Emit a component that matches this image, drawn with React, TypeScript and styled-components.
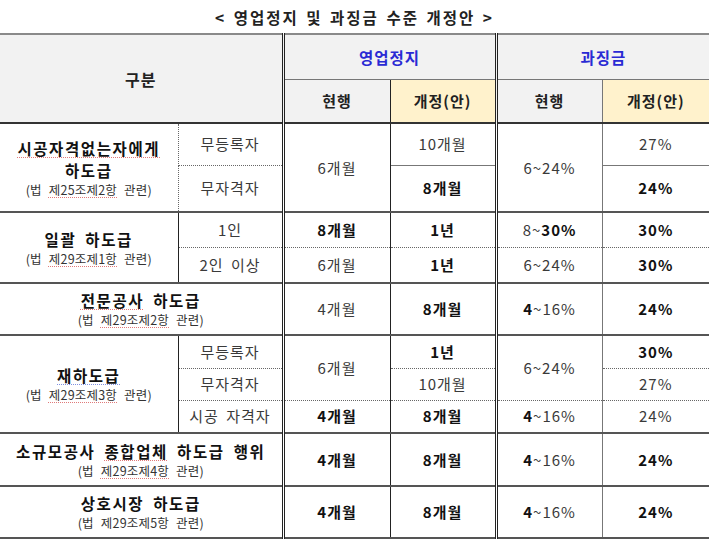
import React from "react";
import styled, { createGlobalStyle, css } from "styled-components";

const Global = createGlobalStyle`
  html, body { margin: 0; padding: 0; background: #ffffff; }
  body { font-family: "Noto Sans CJK KR", "Noto Sans", sans-serif; color: #333; }
`;

const Page = styled.div`
  width: 709px;
  display: flex;
  flex-direction: column;
`;

const Title = styled.div`
  height: 33px;
  display: flex;
  align-items: center;
  justify-content: center;
  font-size: 15.5px;
  font-weight: 700;
  letter-spacing: 2px;
  word-spacing: 2px;
  color: #222;
`;

const Table = styled.table`
  width: 709px;
  border-collapse: collapse;
  table-layout: fixed;
  border-top: 2px solid #8a8a8a;
  border-bottom: 2px solid #555;
`;

type Left = "none" | "dot" | "double" | "black" | "gray";
type Top = "none" | "dot" | "thin" | "group" | "head";
type Bg = "white" | "gray" | "yellow";

const leftBorder = (l: Left) => {
  switch (l) {
    case "dot":
      return "1px dotted #666";
    case "double":
      return "3px double #222";
    case "black":
      return "1px solid #222";
    case "gray":
      return "1px solid #777";
    default:
      return "none";
  }
};

const topBorder = (t: Top) => {
  switch (t) {
    case "dot":
      return "1px dotted #666";
    case "thin":
      return "1px solid #777";
    case "group":
      return "2px solid #555";
    case "head":
      return "2px solid #333";
    default:
      return "none";
  }
};

const bgColor = (b: Bg) =>
  b === "gray" ? "#f2f2f2" : b === "yellow" ? "#fff2cc" : "#ffffff";

const Row = styled.tr<{ $h: number }>`
  height: ${(p) => p.$h}px;
`;

const Cell = styled.td<{
  $left?: Left;
  $top?: Top;
  $bg?: Bg;
  $bold?: boolean;
  $blue?: boolean;
}>`
  padding: 0;
  text-align: center;
  vertical-align: middle;
  font-size: 15px;
  letter-spacing: 1px;
  word-spacing: 3px;
  line-height: 20px;
  border-left: ${(p) => leftBorder(p.$left ?? "none")};
  border-top: ${(p) => topBorder(p.$top ?? "none")};
  background: ${(p) => bgColor(p.$bg ?? "white")};
  color: ${(p) => (p.$blue ? "#2a2ad4" : p.$bold ? "#111" : "#3a3a3a")};
  font-weight: ${(p) => (p.$bold || p.$blue ? 700 : 400)};
  ${(p) =>
    p.$bg === "gray" || p.$bg === "yellow"
      ? css`
          color: ${p.$blue ? "#2a2ad4" : "#222"};
          font-weight: 700;
          font-size: ${p.$blue ? "15.5px" : "15px"};
        `
      : ""}
`;

const Strong = styled.b`
  font-weight: 700;
  color: #111;
`;

const MainLabel = styled.div`
  font-size: 15.5px;
  font-weight: 700;
  line-height: 22px;
  color: #111;
  letter-spacing: 1.6px;
  word-spacing: 4px;
`;

const SubLabel = styled.div`
  font-size: 12.5px;
  font-weight: 400;
  line-height: 18px;
  color: #333;
  letter-spacing: 0.2px;
  word-spacing: 4px;
`;

const Spell = styled.span<{ $c?: "red" | "blue" }>`
  text-decoration-line: underline;
  text-decoration-style: dotted;
  text-decoration-color: ${(p) => (p.$c === "blue" ? "#7f90e0" : "#e07a7a")};
  text-decoration-thickness: 1px;
  text-underline-offset: 2px;
`;

const Label = ({
  main,
  sub,
}: {
  main: React.ReactNode;
  sub: React.ReactNode;
}) => (
  <>
    {main}
    <SubLabel>{sub}</SubLabel>
  </>
);

export default function App() {
  return (
    <Page>
      <Global />
      <Title>&lt; 영업정지 및 과징금 수준 개정안 &gt;</Title>
      <Table>
        <colgroup>
          <col style={{ width: 178 }} />
          <col style={{ width: 105 }} />
          <col style={{ width: 107 }} />
          <col style={{ width: 106 }} />
          <col style={{ width: 106 }} />
          <col style={{ width: 107 }} />
        </colgroup>
        <tbody>
          <Row $h={45}>
            <Cell colSpan={2} rowSpan={2} $bg="gray" style={{ fontSize: 16 }}>
              구분
            </Cell>
            <Cell colSpan={2} $bg="gray" $left="double" $blue>
              영업정지
            </Cell>
            <Cell colSpan={2} $bg="gray" $left="double" $blue>
              과징금
            </Cell>
          </Row>
          <Row $h={44}>
            <Cell $bg="gray" $left="double" $top="thin">
              현행
            </Cell>
            <Cell $bg="yellow" $left="black" $top="thin">
              개정(안)
            </Cell>
            <Cell $bg="gray" $left="double" $top="thin">
              현행
            </Cell>
            <Cell $bg="yellow" $left="gray" $top="thin">
              개정(안)
            </Cell>
          </Row>

          {/* group 1 */}
          <Row $h={42}>
            <Cell rowSpan={2} $top="head">
              <Label
                main={
                  <>
                    <MainLabel>
                      <Spell>시공자격없는자에게</Spell>
                    </MainLabel>
                    <MainLabel>하도급</MainLabel>
                  </>
                }
                sub={
                  <>
                    (법 <Spell>제25조제2항</Spell> 관련)
                  </>
                }
              />
            </Cell>
            <Cell $top="head" $left="dot">
              무등록자
            </Cell>
            <Cell rowSpan={2} $top="head" $left="double">
              6개월
            </Cell>
            <Cell $top="head" $left="black">
              10개월
            </Cell>
            <Cell rowSpan={2} $top="head" $left="double">
              6~24%
            </Cell>
            <Cell $top="head" $left="gray">
              27%
            </Cell>
          </Row>
          <Row $h={47}>
            <Cell $top="dot" $left="dot">
              무자격자
            </Cell>
            <Cell $top="thin" $left="black" $bold>
              8개월
            </Cell>
            <Cell $top="thin" $left="gray" $bold>
              24%
            </Cell>
          </Row>

          {/* group 2 */}
          <Row $h={35}>
            <Cell rowSpan={2} $top="group">
              <Label
                main={<MainLabel>일괄 하도급</MainLabel>}
                sub={
                  <>
                    (법 <Spell>제29조제1항</Spell> 관련)
                  </>
                }
              />
            </Cell>
            <Cell $top="group" $left="black">
              1인
            </Cell>
            <Cell $top="group" $left="double" $bold>
              8개월
            </Cell>
            <Cell $top="group" $left="black" $bold>
              1년
            </Cell>
            <Cell $top="group" $left="double">
              8~<Strong>30%</Strong>
            </Cell>
            <Cell $top="group" $left="gray" $bold>
              30%
            </Cell>
          </Row>
          <Row $h={36}>
            <Cell $top="dot" $left="black">
              2인 이상
            </Cell>
            <Cell $top="dot" $left="double">
              6개월
            </Cell>
            <Cell $top="dot" $left="black" $bold>
              1년
            </Cell>
            <Cell $top="dot" $left="double">
              6~24%
            </Cell>
            <Cell $top="dot" $left="gray" $bold>
              30%
            </Cell>
          </Row>

          {/* row 3 */}
          <Row $h={52}>
            <Cell colSpan={2} $top="group">
              <Label
                main={
                  <MainLabel>
                    <Spell>전문공사</Spell> 하도급
                  </MainLabel>
                }
                sub={
                  <>
                    (법 <Spell>제29조제2항</Spell> 관련)
                  </>
                }
              />
            </Cell>
            <Cell $top="group" $left="double">
              4개월
            </Cell>
            <Cell $top="group" $left="black" $bold>
              8개월
            </Cell>
            <Cell $top="group" $left="double">
              <Strong>4</Strong>~16%
            </Cell>
            <Cell $top="group" $left="gray" $bold>
              24%
            </Cell>
          </Row>

          {/* group 4 */}
          <Row $h={33}>
            <Cell rowSpan={3} $top="group">
              <Label
                main={
                  <MainLabel>
                    <Spell $c="blue">재하도급</Spell>
                  </MainLabel>
                }
                sub={
                  <>
                    (법 <Spell>제29조제3항</Spell> 관련)
                  </>
                }
              />
            </Cell>
            <Cell $top="group" $left="black">
              무등록자
            </Cell>
            <Cell rowSpan={2} $top="group" $left="double">
              6개월
            </Cell>
            <Cell $top="group" $left="black" $bold>
              1년
            </Cell>
            <Cell rowSpan={2} $top="group" $left="double">
              6~24%
            </Cell>
            <Cell $top="group" $left="gray" $bold>
              30%
            </Cell>
          </Row>
          <Row $h={32}>
            <Cell $top="dot" $left="black">
              무자격자
            </Cell>
            <Cell $top="dot" $left="black">
              10개월
            </Cell>
            <Cell $top="dot" $left="gray">
              27%
            </Cell>
          </Row>
          <Row $h={33}>
            <Cell $top="dot" $left="black">
              시공 자격자
            </Cell>
            <Cell $top="dot" $left="double" $bold>
              4개월
            </Cell>
            <Cell $top="dot" $left="black" $bold>
              8개월
            </Cell>
            <Cell $top="dot" $left="double">
              <Strong>4</Strong>~16%
            </Cell>
            <Cell $top="dot" $left="gray">
              24%
            </Cell>
          </Row>

          {/* row 5 */}
          <Row $h={53}>
            <Cell colSpan={2} $top="group">
              <Label
                main={
                  <MainLabel>
                    소규모공사 <Spell>종합업체</Spell> 하도급 행위
                  </MainLabel>
                }
                sub={
                  <>
                    (법 <Spell>제29조제4항</Spell> 관련)
                  </>
                }
              />
            </Cell>
            <Cell $top="group" $left="double" $bold>
              4개월
            </Cell>
            <Cell $top="group" $left="black" $bold>
              8개월
            </Cell>
            <Cell $top="group" $left="double">
              <Strong>4</Strong>~16%
            </Cell>
            <Cell $top="group" $left="gray" $bold>
              24%
            </Cell>
          </Row>

          {/* row 6 */}
          <Row $h={52}>
            <Cell colSpan={2} $top="group">
              <Label
                main={<MainLabel>상호시장 하도급</MainLabel>}
                sub={<>(법 제29조제5항 관련)</>}
              />
            </Cell>
            <Cell $top="group" $left="double" $bold>
              4개월
            </Cell>
            <Cell $top="group" $left="black" $bold>
              8개월
            </Cell>
            <Cell $top="group" $left="double">
              <Strong>4</Strong>~16%
            </Cell>
            <Cell $top="group" $left="gray" $bold>
              24%
            </Cell>
          </Row>
        </tbody>
      </Table>
    </Page>
  );
}
